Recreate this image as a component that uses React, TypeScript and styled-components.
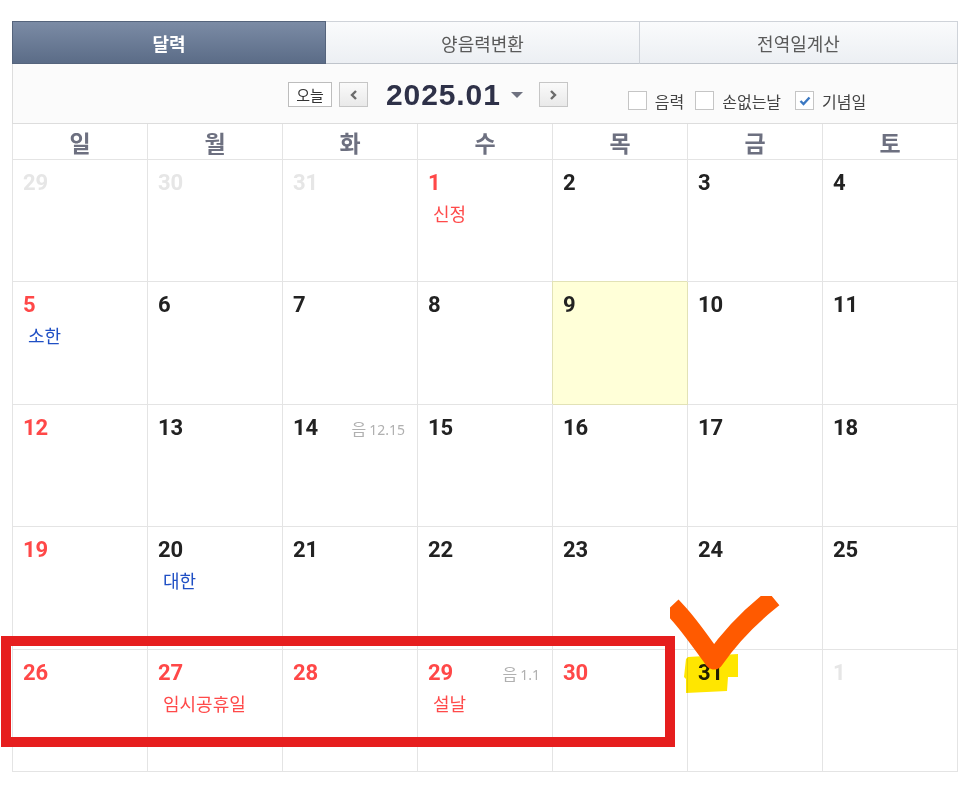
import styled, { createGlobalStyle } from "styled-components";

const GlobalStyle = createGlobalStyle`
  body {
    margin: 0;
    background: #ffffff;
    font-family: "Noto Sans CJK KR", "Noto Sans", sans-serif;
  }
`;

type Tone = "red" | "black" | "faded";
type LabelTone = "red" | "blue";

interface Day {
  n: number;
  tone: Tone;
  label?: string;
  labelTone?: LabelTone;
  lunar?: string;
  today?: boolean;
}

const weeks: Day[][] = [
  [
    { n: 29, tone: "faded" },
    { n: 30, tone: "faded" },
    { n: 31, tone: "faded" },
    { n: 1, tone: "red", label: "신정", labelTone: "red" },
    { n: 2, tone: "black" },
    { n: 3, tone: "black" },
    { n: 4, tone: "black" },
  ],
  [
    { n: 5, tone: "red", label: "소한", labelTone: "blue" },
    { n: 6, tone: "black" },
    { n: 7, tone: "black" },
    { n: 8, tone: "black" },
    { n: 9, tone: "black", today: true },
    { n: 10, tone: "black" },
    { n: 11, tone: "black" },
  ],
  [
    { n: 12, tone: "red" },
    { n: 13, tone: "black" },
    { n: 14, tone: "black", lunar: "12.15" },
    { n: 15, tone: "black" },
    { n: 16, tone: "black" },
    { n: 17, tone: "black" },
    { n: 18, tone: "black" },
  ],
  [
    { n: 19, tone: "red" },
    { n: 20, tone: "black", label: "대한", labelTone: "blue" },
    { n: 21, tone: "black" },
    { n: 22, tone: "black" },
    { n: 23, tone: "black" },
    { n: 24, tone: "black" },
    { n: 25, tone: "black" },
  ],
  [
    { n: 26, tone: "red" },
    { n: 27, tone: "red", label: "임시공휴일", labelTone: "red" },
    { n: 28, tone: "red" },
    { n: 29, tone: "red", label: "설날", labelTone: "red", lunar: "1.1" },
    { n: 30, tone: "red" },
    { n: 31, tone: "black" },
    { n: 1, tone: "faded" },
  ],
];

const rowHeights = "122px 123px 122px 123px 122px";
const weekdays = ["일", "월", "화", "수", "목", "금", "토"];

const App = () => {
  return (
    <StyledPage>
      <GlobalStyle />
      <Tabs>
        <Tab $active>달력</Tab>
        <Tab>양음력변환</Tab>
        <Tab>전역일계산</Tab>
      </Tabs>

      <Toolbar>
        <NavGroup>
          <TodayButton>오늘</TodayButton>
          <ArrowButton aria-label="이전 달">
            <svg width="10" height="12" viewBox="0 0 10 12">
              <path d="M7 2 L3 6 L7 10" fill="none" stroke="#6b6b6b" strokeWidth="2.4" />
            </svg>
          </ArrowButton>
          <MonthTitle>
            2025.01
            <svg width="14" height="8" viewBox="0 0 14 8">
              <path d="M1 1 H13 L7 7 Z" fill="#6f7280" />
            </svg>
          </MonthTitle>
          <ArrowButton aria-label="다음 달">
            <svg width="10" height="12" viewBox="0 0 10 12">
              <path d="M3 2 L7 6 L3 10" fill="none" stroke="#6b6b6b" strokeWidth="2.4" />
            </svg>
          </ArrowButton>
        </NavGroup>
        <Options>
          <Option>
            <Box />
            음력
          </Option>
          <Option>
            <Box />
            손없는날
          </Option>
          <Option>
            <Box>
              <svg width="12" height="10" viewBox="0 0 12 10">
                <path d="M1.5 5 L4.5 8 L10.5 1.5" fill="none" stroke="#3b78c2" strokeWidth="2.4" />
              </svg>
            </Box>
            기념일
          </Option>
        </Options>
      </Toolbar>

      <WeekHeader>
        {weekdays.map((w) => (
          <WeekName key={w}>{w}</WeekName>
        ))}
      </WeekHeader>

      <Grid>
        {weeks.flat().map((d, i) => (
          <Cell key={i} $today={d.today}>
            <CellTop>
              <DayNum $tone={d.tone}>{d.n}</DayNum>
              {d.lunar && (
                <Lunar>
                  <span>음</span>
                  {d.lunar}
                </Lunar>
              )}
            </CellTop>
            {d.label && <Holiday $tone={d.labelTone}>{d.label}</Holiday>}
          </Cell>
        ))}
      </Grid>

      {/* hand-drawn annotations over the screenshot */}
      <RedFrame />
      <Highlight width="56" height="40" viewBox="0 0 56 40">
        <path d="M4 4 L54 1 L54 24 L44 24 L43 38 L2 40 L2 26 L0 24 L2 6 Z" fill="#ffe600" />
      </Highlight>
      <CheckMark width="110" height="80" viewBox="0 0 110 80">
        <path
          d="M8 17 C 20 30, 30 45, 44 64 C 58 44, 74 26, 96 8"
          fill="none"
          stroke="#ff5a00"
          strokeWidth="19"
          strokeLinecap="square"
          strokeLinejoin="round"
        />
      </CheckMark>
    </StyledPage>
  );
};

const StyledPage = styled.div`
  position: relative;
  width: 946px;
  padding: 21px 0 0 12px;
`;

const Tabs = styled.div`
  display: grid;
  grid-template-columns: 314px 314px 1fr;
  height: 43px;
`;

const Tab = styled.div<{ $active?: boolean }>`
  display: flex;
  align-items: center;
  justify-content: center;
  box-sizing: border-box;
  font-size: 18px;
  border: 1px solid ${(p) => (p.$active ? "#55647c" : "#cfd3d9")};
  border-left-width: ${(p) => (p.$active ? "1px" : "0")};
  background: ${(p) =>
    p.$active
      ? "linear-gradient(#7b8ba5, #5b6c87)"
      : "linear-gradient(#fafbfc, #eceff3)"};
  color: ${(p) => (p.$active ? "#ffffff" : "#5a5a5a")};
  font-weight: ${(p) => (p.$active ? 700 : 400)};
  border-bottom-color: ${(p) => (p.$active ? "#55647c" : "#bfc4cb")};
`;

const Toolbar = styled.div`
  display: flex;
  align-items: flex-start;
  height: 59px;
  background: #fbfbfb;
  border: 1px solid #dddddd;
  border-top: 0;
  padding-left: 275px;
`;

const NavGroup = styled.div`
  display: flex;
  align-items: center;
  margin-top: 18px;
`;

const TodayButton = styled.div`
  box-sizing: border-box;
  width: 44px;
  height: 25px;
  display: flex;
  align-items: center;
  justify-content: center;
  border: 1px solid #bdbdbd;
  background: #ffffff;
  font-size: 15px;
  color: #333333;
`;

const ArrowButton = styled.div`
  box-sizing: border-box;
  width: 29px;
  height: 25px;
  margin-left: 7px;
  display: flex;
  align-items: center;
  justify-content: center;
  border: 1px solid #c6c6c6;
  background: linear-gradient(#fafafa, #e9e9e9);
`;

const MonthTitle = styled.div`
  display: flex;
  align-items: center;
  gap: 9px;
  margin: 0 8px 0 18px;
  font-family: "Liberation Sans", Arial, sans-serif;
  font-weight: 700;
  font-size: 30px;
  letter-spacing: 0.9px;
  color: #2e3148;
  line-height: 25px;
`;

const Options = styled.div`
  display: flex;
  align-items: center;
  margin: 27px 0 0 60px;
  gap: 11px;
`;

const Option = styled.label`
  display: flex;
  align-items: center;
  gap: 8px;
  font-size: 16px;
  color: #444444;
  line-height: 18px;
  &:last-child {
    margin-left: 3px;
  }
`;

const Box = styled.span`
  box-sizing: border-box;
  width: 19px;
  height: 19px;
  display: flex;
  align-items: center;
  justify-content: center;
  border: 1px solid #c5c5c5;
  background: #ffffff;
`;

const WeekHeader = styled.div`
  display: grid;
  grid-template-columns: repeat(7, 135px);
  border-left: 1px solid #e4e4e4;
  height: 35px;
  border-bottom: 1px solid #e4e4e4;
`;

const WeekName = styled.div`
  display: flex;
  align-items: center;
  justify-content: center;
  border-right: 1px solid #e4e4e4;
  font-size: 23px;
  font-weight: 700;
  color: #6d7080;
`;

const Grid = styled.div`
  display: grid;
  grid-template-columns: repeat(7, 135px);
  grid-template-rows: ${rowHeights};
  border-left: 1px solid #e4e4e4;
`;

const Cell = styled.div<{ $today?: boolean }>`
  box-sizing: border-box;
  border-right: 1px solid #e4e4e4;
  border-bottom: 1px solid #e4e4e4;
  padding: 12px 12px 0 10px;
  background: ${(p) => (p.$today ? "#ffffd8" : "#ffffff")};
  ${(p) => p.$today && "border-color: #e2e2b6; box-shadow: -1px -1px 0 #e2e2b6;"}
`;

const CellTop = styled.div`
  display: flex;
  align-items: center;
  justify-content: space-between;
  height: 22px;
`;

const toneColor: Record<Tone, string> = {
  red: "#ff4848",
  black: "#222222",
  faded: "#e6e6e6",
};

const DayNum = styled.span<{ $tone: Tone }>`
  font-family: Roboto, "Noto Sans", sans-serif;
  font-weight: 700;
  font-size: 22px;
  line-height: 22px;
  color: ${(p) => toneColor[p.$tone]};
`;

const Lunar = styled.span`
  font-family: "Noto Sans", sans-serif;
  font-size: 14px;
  color: #b0b0b0;
  span {
    font-family: "Noto Sans CJK KR", sans-serif;
    font-size: 16px;
    margin-right: 3px;
  }
`;

const Holiday = styled.div<{ $tone?: LabelTone }>`
  margin: 8px 0 0 5px;
  font-size: 18px;
  line-height: 22px;
  color: ${(p) => (p.$tone === "blue" ? "#1f4fc4" : "#ff4a4a")};
`;

const RedFrame = styled.div`
  position: absolute;
  left: 1px;
  top: 636px;
  width: 674px;
  height: 111px;
  box-sizing: border-box;
  border: 10px solid #e61e1e;
  pointer-events: none;
`;

const Highlight = styled.svg`
  position: absolute;
  left: 684px;
  top: 653px;
  mix-blend-mode: multiply;
  pointer-events: none;
`;

const CheckMark = styled.svg`
  position: absolute;
  left: 670px;
  top: 596px;
  pointer-events: none;
`;

export default App;
